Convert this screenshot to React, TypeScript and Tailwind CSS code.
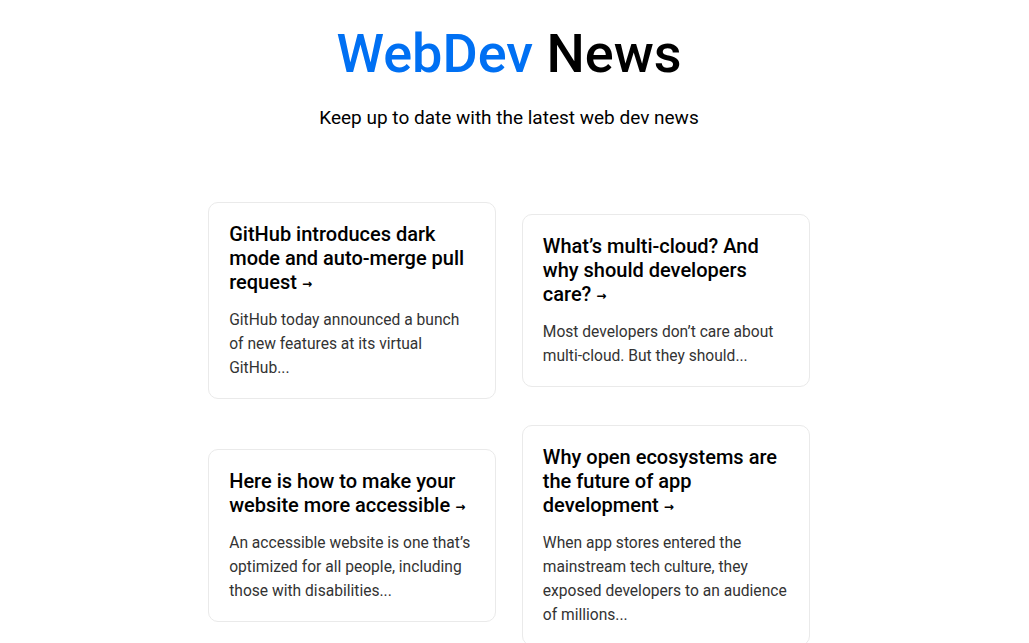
import React from "react";

const cards = [
  {
    title: "GitHub introduces dark mode and auto-merge pull request",
    body: "GitHub today announced a bunch of new features at its virtual GitHub...",
  },
  {
    title: "What’s multi-cloud? And why should developers care?",
    body: "Most developers don’t care about multi-cloud. But they should...",
  },
  {
    title: "Here is how to make your website more accessible",
    body: "An accessible website is one that’s optimized for all people, including those with disabilities...",
  },
  {
    title: "Why open ecosystems are the future of app development",
    body: "When app stores entered the mainstream tech culture, they exposed developers to an audience of millions...",
  },
];

export default function App() {
  return (
    <div
      className="min-h-screen bg-white text-black pr-[11px]"
      style={{ fontFamily: 'Roboto, "Noto Sans", sans-serif' }}
    >
      <main className="flex flex-col items-center pt-[23px] pb-20">
        <h1 className="text-[54px] leading-[1.15] font-medium text-center">
          <span className="text-[#0070f3]">WebDev</span> News
        </h1>
        <p className="mt-[19px] text-[19px] leading-[1.5] text-center text-black">
          Keep up to date with the latest web dev news
        </p>
        <div className="mt-[56px] flex flex-wrap items-center justify-center w-full max-w-[640px]">
          {cards.map((c) => (
            <a
              key={c.title}
              href="#"
              className="basis-[45%] mx-[0.8rem] my-[13px] px-5 pt-[19px] pb-[18px] border border-[#eaeaea] rounded-[10px] text-left"
            >
              <h3 className="text-[20px] leading-[24px] font-medium mb-3 text-black">
                {c.title}{" "}
                <span
                  className="text-[12px] font-bold align-[1px]"
                  style={{ fontFamily: '"DejaVu Sans", sans-serif' }}
                >
                  &rarr;
                </span>
              </h3>
              <p className="text-[15.6px] leading-[24px] text-[#333]">{c.body}</p>
            </a>
          ))}
        </div>
      </main>
    </div>
  );
}
